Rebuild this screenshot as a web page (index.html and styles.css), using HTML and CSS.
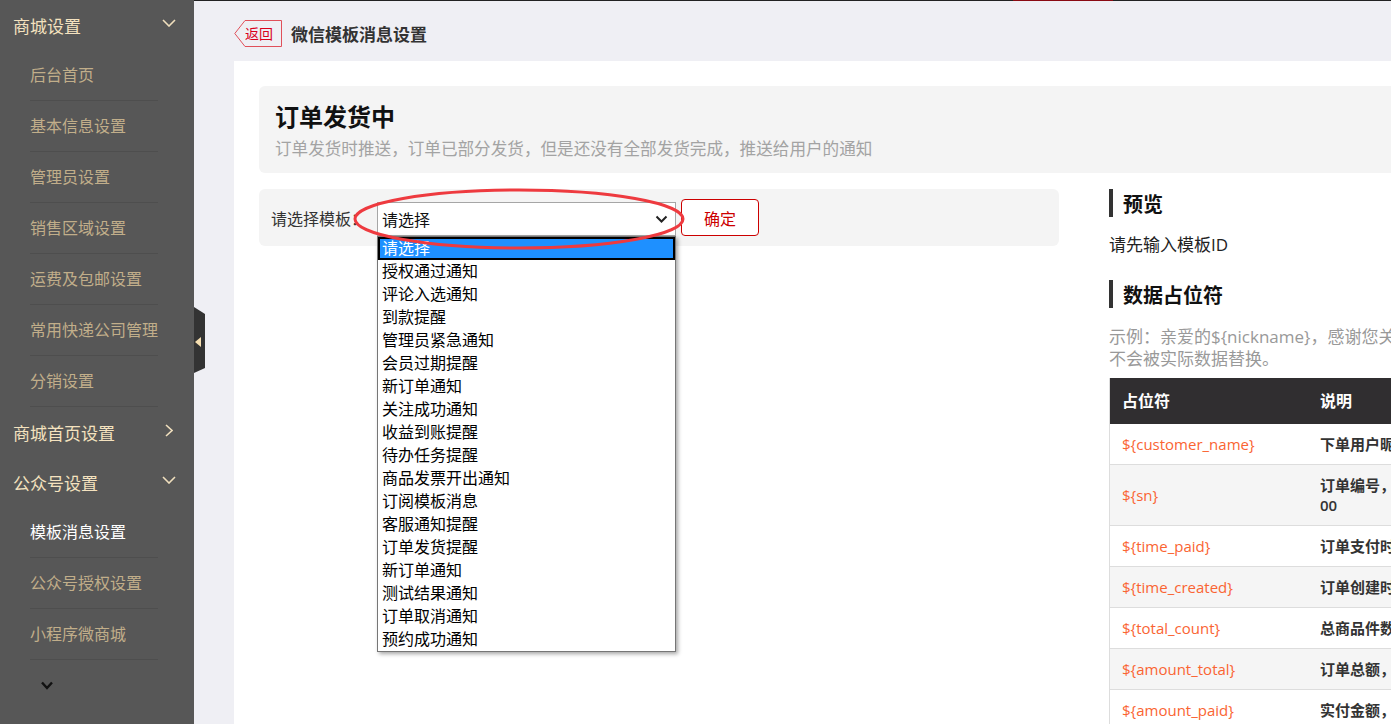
FILE: index.html
```html
<!DOCTYPE html>
<html lang="zh-CN">
<head>
    <meta charset="UTF-8">
    <meta name="viewport" content="width=device-width, initial-scale=1.0">
    <title>微信模板消息设置</title>
    <link rel="stylesheet" href="styles.css">
</head>
<body>
    <div class="layout">
        <aside class="sidebar">
            <div class="menu-group">
                <div class="menu-title">
                    <span>商城设置</span>
                    <svg class="chev-down" width="14" height="8" viewBox="0 0 14 8"><path d="M1 1l6 6 6-6"/></svg>
                </div>
                <ul class="submenu">
                    <li>后台首页</li>
                    <li>基本信息设置</li>
                    <li>管理员设置</li>
                    <li>销售区域设置</li>
                    <li>运费及包邮设置</li>
                    <li>常用快递公司管理</li>
                    <li>分销设置</li>
                </ul>
            </div>
            <div class="menu-group">
                <div class="menu-title">
                    <span>商城首页设置</span>
                    <svg class="chev-right" width="8" height="13" viewBox="0 0 8 13"><path d="M1 1l6 5.5-6 5.5"/></svg>
                </div>
            </div>
            <div class="menu-group">
                <div class="menu-title">
                    <span>公众号设置</span>
                    <svg class="chev-down" width="14" height="8" viewBox="0 0 14 8"><path d="M1 1l6 6 6-6"/></svg>
                </div>
                <ul class="submenu">
                    <li class="active">模板消息设置</li>
                    <li>公众号授权设置</li>
                    <li>小程序微商城</li>
                    <li class="more">
                        <svg width="12" height="9" viewBox="0 0 12 9"><path d="M1 1.5L6 7l5-5.5"/></svg>
                    </li>
                </ul>
            </div>
        </aside>
        <span class="sidebar-toggle"></span>

        <main class="main">
            <div class="topline"><span></span></div>
            <div class="page-head">
                <a class="back" href="#">
                    <svg width="48" height="27" viewBox="0 0 48 27"><path d="M11 .5H47.5V26.5H11L.8 13.5Z"/></svg>
                    <span>返回</span>
                </a>
                <span class="page-title">微信模板消息设置</span>
            </div>

            <div class="panel">
                <div class="tpl-head">
                    <h1>订单发货中</h1>
                    <p>订单发货时推送，订单已部分发货，但是还没有全部发货完成，推送给用户的通知</p>
                </div>

                <div class="tpl-body">
                    <div class="tpl-left">
                        <form class="pick-row" onsubmit="return false;">
                            <label class="pick-label">请选择模板：</label>
                            <div class="select">
                                <span>请选择</span>
                                <svg width="13" height="8" viewBox="0 0 13 8"><path d="M1.5 1.5l5 5 5-5"/></svg>
                                <ul class="options">
                                    <li class="selected">请选择</li>
                                    <li>授权通过通知</li>
                                    <li>评论入选通知</li>
                                    <li>到款提醒</li>
                                    <li>管理员紧急通知</li>
                                    <li>会员过期提醒</li>
                                    <li>新订单通知</li>
                                    <li>关注成功通知</li>
                                    <li>收益到账提醒</li>
                                    <li>待办任务提醒</li>
                                    <li>商品发票开出通知</li>
                                    <li>订阅模板消息</li>
                                    <li>客服通知提醒</li>
                                    <li>订单发货提醒</li>
                                    <li>新订单通知</li>
                                    <li>测试结果通知</li>
                                    <li>订单取消通知</li>
                                    <li>预约成功通知</li>
                                </ul>
                            </div>
                            <button class="btn">确定</button>
                            <svg class="mark" width="334" height="64" viewBox="0 0 334 64"><ellipse cx="167" cy="32" rx="164" ry="29"/></svg>
                        </form>
                    </div>

                    <div class="tpl-right">
                        <h3 class="sec-title">预览</h3>
                        <p class="preview-text">请先输入模板ID</p>
                        <h3 class="sec-title">数据占位符</h3>
                        <p class="example">示例：亲爱的${nickname}，感谢您关注！占位符写错时<br>不会被实际数据替换。</p>
                        <table class="ph-table">
                            <thead>
                                <tr><th class="ph">占位符</th><th>说明</th></tr>
                            </thead>
                            <tbody>
                                <tr><td class="ph">${customer_name}</td><td class="desc">下单用户昵称</td></tr>
                                <tr><td class="ph">${sn}</td><td class="desc">订单编号，如：2020062015300012300</td></tr>
                                <tr><td class="ph">${time_paid}</td><td class="desc">订单支付时间</td></tr>
                                <tr><td class="ph">${time_created}</td><td class="desc">订单创建时间</td></tr>
                                <tr><td class="ph">${total_count}</td><td class="desc">总商品件数</td></tr>
                                <tr><td class="ph">${amount_total}</td><td class="desc">订单总额，单位：元</td></tr>
                                <tr><td class="ph">${amount_paid}</td><td class="desc">实付金额，单位：元</td></tr>
                                <tr><td class="ph">${goods_name}</td><td class="desc">商品名称</td></tr>
                            </tbody>
                        </table>
                    </div>
                </div>
            </div>
        </main>
    </div>
</body>
</html>
```

FILE: styles.css
```css
html, body {
    margin: 0;
    height: 100%;
    overflow: hidden;
}
body {
    font-family: "Open Sans", "Noto Sans CJK SC", sans-serif;
    color: #333;
    background-color: #efeff4;
}
.layout {
    display: flex;
    height: 100%;
    position: relative;
}

/* sidebar */
.sidebar {
    width: 194px;
    flex: none;
    background-color: #575757;
}
.menu-title {
    display: flex;
    align-items: center;
    justify-content: space-between;
    height: 50px;
    padding: 0 18px 0 13px;
    font-size: 17px;
    color: #f4e2bf;
}
.menu-title svg {
    fill: none;
    stroke: #f0dfbd;
    stroke-width: 1.6;
}
.menu-title .chev-down {
    margin-top: -5px;
}
.menu-title .chev-right {
    margin-right: 3px;
    margin-top: -3px;
}
.submenu {
    list-style: none;
    margin: 0;
    padding: 0;
}
.submenu li {
    height: 50px;
    line-height: 50px;
    margin: 0 36px 0 30px;
    border-bottom: 1px solid #4e4e4e;
    font-size: 16px;
    color: #c1ae8a;
}
.submenu li.active {
    color: #fff;
}
.submenu li.more {
    border-bottom: none;
    display: flex;
    align-items: center;
    padding-left: 11px;
}
.submenu li.more svg {
    fill: none;
    stroke: #111;
    stroke-width: 2.4;
}
.sidebar-toggle {
    position: absolute;
    left: 194px;
    top: 307px;
    width: 11px;
    height: 66px;
    background-color: #333;
    clip-path: polygon(0 0, 100% 7px, 100% 61px, 0 100%);
}
.sidebar-toggle::before {
    content: "";
    position: absolute;
    left: 1px;
    top: 30px;
    border-right: 6px solid #f5deb0;
    border-top: 5px solid transparent;
    border-bottom: 5px solid transparent;
}

/* main */
.main {
    flex: 1;
    min-width: 0;
    overflow: hidden;
}
.topline {
    height: 1px;
    background-color: #222;
    padding-left: 819px;
}
.topline span {
    display: block;
    width: 100px;
    height: 1px;
    background-color: #8a0a12;
}
.page-head {
    height: 60px;
    box-sizing: border-box;
    padding: 4px 0 0 40px;
    display: flex;
    align-items: center;
}
.back {
    position: relative;
    display: flex;
    align-items: center;
    width: 48px;
    height: 27px;
    box-sizing: border-box;
    padding-left: 11px;
    font-size: 14px;
    color: #d9001b;
    text-decoration: none;
}
.back svg {
    position: absolute;
    left: 0;
    top: 0;
    fill: none;
    stroke: #e0505a;
}
.back span {
    position: relative;
}
.page-title {
    margin-left: 9px;
    font-size: 17px;
    font-weight: bold;
    color: #333;
}
.panel {
    width: 1360px;
    min-height: 663px;
    margin-left: 40px;
    padding: 25px;
    box-sizing: border-box;
    background-color: #fff;
}
.tpl-head {
    background-color: #f4f4f4;
    border-radius: 6px;
    padding: 15px 16px 12px;
}
.tpl-head h1 {
    margin: 0;
    font-size: 24px;
    line-height: 32px;
    color: #111;
}
.tpl-head p {
    margin: 4px 0 0;
    font-size: 16.6px;
    line-height: 24px;
    color: #a3a3a3;
}
.tpl-body {
    display: flex;
    align-items: flex-start;
    gap: 50px;
    margin-top: 16px;
}
.tpl-left {
    width: 800px;
    flex: none;
}
.pick-row {
    position: relative;
    display: flex;
    align-items: center;
    height: 57px;
    box-sizing: border-box;
    margin: 0;
    padding: 10px 12px;
    background-color: #f4f4f4;
    border-radius: 6px;
}
.pick-label {
    width: 106px;
    font-size: 16px;
    color: #333;
}
.select {
    align-self: flex-end;
    position: relative;
    width: 299px;
    height: 34px;
    box-sizing: border-box;
    border: 1px solid #a6a6a6;
    background-color: #fff;
    display: flex;
    align-items: center;
    justify-content: space-between;
    padding: 0 7px 0 4px;
    font-size: 16px;
    color: #111;
}
.select > svg {
    fill: none;
    stroke: #222;
    stroke-width: 2;
}
.options {
    position: absolute;
    left: -1px;
    top: 33px;
    width: 299px;
    box-sizing: border-box;
    list-style: none;
    margin: 0;
    padding: 0;
    border: 1px solid #767676;
    background-color: #fff;
    box-shadow: 2px 2px 4px rgba(0, 0, 0, 0.35);
    z-index: 2;
}
.options li {
    height: 23px;
    line-height: 23px;
    padding-left: 4px;
    font-size: 16px;
    color: #000;
    white-space: nowrap;
}
.options li.selected {
    background-color: #1e90ff;
    color: #fff;
    outline: 2px solid #000;
    outline-offset: -2px;
}
.btn {
    margin-left: 5px;
    width: 78px;
    height: 37px;
    border: 1px solid #cc0000;
    border-radius: 4px;
    background-color: #fff;
    color: #cc0000;
    font-family: inherit;
    font-size: 16px;
    cursor: pointer;
}
.mark {
    position: absolute;
    left: 93px;
    top: -2px;
    z-index: 3;
    fill: none;
    stroke: #ee3a3f;
    stroke-width: 3;
}

/* right column */
.tpl-right {
    width: 480px;
    flex: none;
}
.sec-title {
    margin: 0;
    border-left: 4px solid #333;
    padding: 2px 0 0 10px;
    height: 28px;
    box-sizing: border-box;
    font-size: 20px;
    line-height: 28px;
    font-weight: bold;
    color: #111;
}
.preview-text {
    margin: 16px 0 23px;
    font-size: 17px;
    line-height: 24px;
    color: #222;
}
.example {
    margin: 18px 0 8px;
    font-size: 17px;
    line-height: 22px;
    color: #999;
}
.ph-table {
    width: 100%;
    border-collapse: collapse;
    border-left: 1px solid #ddd;
}
.ph-table th {
    background-color: #302e30;
    color: #fff;
    text-align: left;
    font-size: 16px;
    font-weight: bold;
    line-height: 22px;
    padding: 12px;
}
.ph-table td {
    padding: 10px 12px;
    font-size: 15px;
    line-height: 20px;
    border-bottom: 1px solid #ddd;
}
.ph-table .ph {
    width: 174px;
}
.ph-table td.ph {
    color: #fa6432;
}
.ph-table td.desc {
    font-weight: 600;
    color: #333;
    word-break: break-all;
}
.ph-table tbody tr:nth-child(even) td {
    background-color: #f5f5f5;
}
```
